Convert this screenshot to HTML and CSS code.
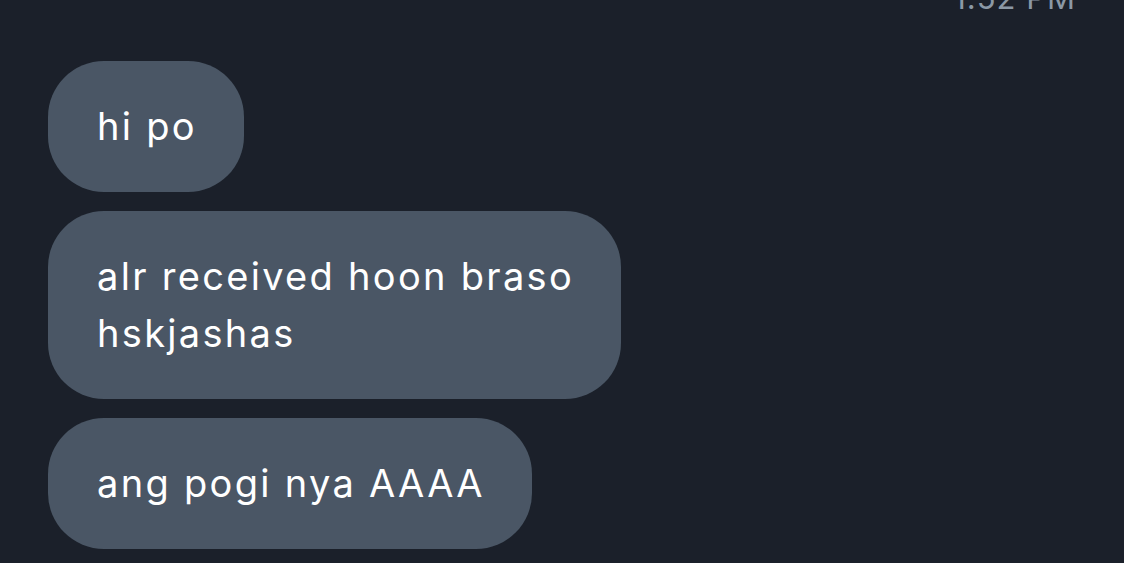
FILE: index.html
```html
<!DOCTYPE html>
<html>
<head>
<meta charset="utf-8">
<link rel="stylesheet" href="styles.css">
</head>
<body>
<div class="chat">
  <div class="time">1:52 PM</div>
  <div class="messages">
    <div class="bubble">hi po</div>
    <div class="bubble">alr received hoon braso<br>hskjashas</div>
    <div class="bubble">ang pogi nya AAAA</div>
  </div>
</div>
</body>
</html>
```
FILE: styles.css
```css
html, body {
  margin: 0;
  padding: 0;
  background: #1b202a;
  height: 100%;
  overflow: hidden;
}
.chat {
  font-family: "Inter", "Roboto", sans-serif;
  color: #ffffff;
}
.time {
  text-align: right;
  color: #8b98a5;
  font-size: 31px;
  line-height: 30px;
  letter-spacing: 1px;
  margin-top: -17px;
  padding-right: 48px;
}
.messages {
  display: flex;
  flex-direction: column;
  align-items: flex-start;
  gap: 19px;
  padding-left: 48px;
  margin-top: 48px;
}
.bubble {
  background: #4a5665;
  border-radius: 56px;
  padding: 37px 47px 37px 49px;
  font-size: 38px;
  line-height: 57px;
  letter-spacing: 2.3px;
}
```
